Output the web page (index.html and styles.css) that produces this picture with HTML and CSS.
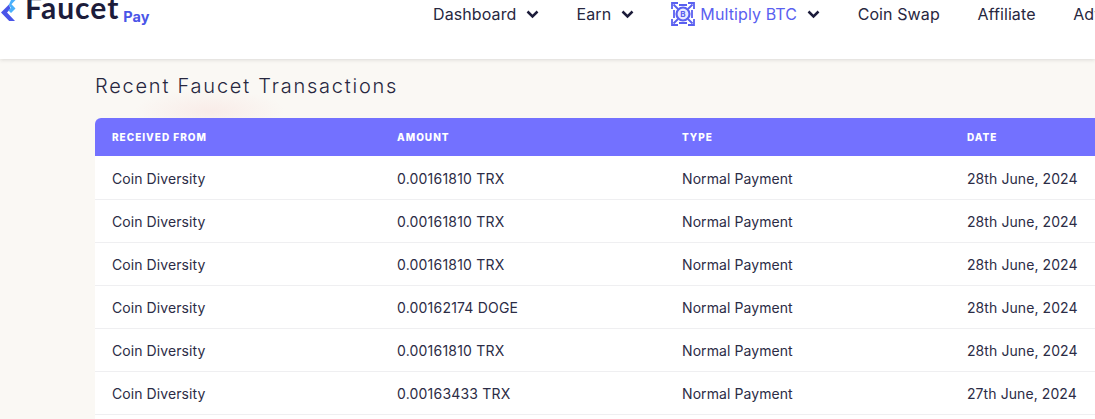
FILE: index.html
```html
<!DOCTYPE html>
<html lang="en">
<head>
<meta charset="utf-8">
<title>Recent Faucet Transactions</title>
<link rel="stylesheet" href="styles.css">
</head>
<body>
<header class="topbar">
  <a class="brand">
    <svg class="brand-mark" width="16" height="22" viewBox="0 0 16 22"><path d="M9 4.5 1 12.6 9.2 21H15L7 12.6 10.5 9Z" fill="#4a55e8"/><path d="M11 0H15.5L11.5 4.2 15.5 8.4 11 13 8.2 10.2 11 8 8.8 5Z" fill="#4ab0fb"/></svg>
    <span class="brand-name">Faucet</span>
    <span class="brand-pay">Pay</span>
  </a>
  <nav class="nav">
    <a class="nav-item">Dashboard <svg class="chev" viewBox="0 0 13 9"><path d="M1.5 1.5 6.5 6.5l5-5"/></svg></a>
    <a class="nav-item">Earn <svg class="chev" viewBox="0 0 13 9"><path d="M1.5 1.5 6.5 6.5l5-5"/></svg></a>
    <a class="nav-item nav-accent">
      <svg class="btc" viewBox="0 0 24 24">
        <path class="btc-frame" d="M7 1H1V7M17 1H23V7M7 23H1V17M17 23H23V17M8 3H16M8 21H16M3 8V16M21 8V16"/>
        <path class="btc-frame" d="M2.500 2.500 7 7M21.500 2.500 17 7M2.500 21.500 7 17M21.500 21.500 17 17"/>
        <circle class="btc-ring" cx="12" cy="12" r="6.500"/>
        <text class="btc-b" x="12" y="15">B</text>
      </svg>
      <span>Multiply BTC</span> <svg class="chev" viewBox="0 0 13 9"><path d="M1.5 1.5 6.5 6.5l5-5"/></svg></a>
    <a class="nav-item">Coin Swap</a>
    <a class="nav-item">Affiliate</a>
    <a class="nav-item">Advertise</a>
  </nav>
</header>
<main class="content">
  <h1 class="title">Recent Faucet Transactions</h1>
  <div class="card">
  <table class="tx">
    <thead>
      <tr><th>Received From</th><th>Amount</th><th>Type</th><th>Date</th></tr>
    </thead>
    <tbody>
      <tr><td>Coin Diversity</td><td>0.00161810 TRX</td><td>Normal Payment</td><td>28th June, 2024</td></tr>
      <tr><td>Coin Diversity</td><td>0.00161810 TRX</td><td>Normal Payment</td><td>28th June, 2024</td></tr>
      <tr><td>Coin Diversity</td><td>0.00161810 TRX</td><td>Normal Payment</td><td>28th June, 2024</td></tr>
      <tr><td>Coin Diversity</td><td>0.00162174 DOGE</td><td>Normal Payment</td><td>28th June, 2024</td></tr>
      <tr><td>Coin Diversity</td><td>0.00161810 TRX</td><td>Normal Payment</td><td>28th June, 2024</td></tr>
      <tr><td>Coin Diversity</td><td>0.00163433 TRX</td><td>Normal Payment</td><td>27th June, 2024</td></tr>
    </tbody>
  </table>
  </div>
</main>
</body>
</html>
```
FILE: styles.css
```css
* { box-sizing: border-box; }
html, body { margin: 0; height: 419px; overflow: hidden; }
body {
  background: #faf8f4;
  font-family: Inter, "Liberation Sans", sans-serif;
  color: #27273f;
  width: 1095px;
}
.topbar {
  height: 59px;
  background: #fff;
  box-shadow: 0 1px 4px rgba(60, 60, 60, .16);
  display: flex;
  align-items: flex-start;
  position: relative;
  overflow: hidden;
}
.brand { display: flex; align-items: flex-start; width: 433px; flex: none; height: 30px; }
.brand-mark { flex: none; margin-right: 9px; }
.brand-name {
  font-family: Lato, sans-serif;
  font-weight: 700;
  font-size: 30px;
  line-height: 30px;
  letter-spacing: 1px;
  color: #1c1c3a;
  margin: -8px 0 0 0;
}
.brand-pay {
  font-size: 14.5px;
  font-weight: 700;
  color: #4a55e8;
  line-height: 16px;
  margin: 9px 0 0 4px;
}
.nav { display: flex; flex: none; gap: 37.6px; padding-top: 4px; font-size: 16px; }
.nav-item { display: flex; align-items: center; height: 20px; white-space: nowrap; letter-spacing: .1px; gap: 9.5px; }
.nav-accent { color: #5a60f0; gap: 0; }
.nav-accent span { margin: 0 10px 0 5px; }
.chev { width: 13px; height: 9px; fill: none; stroke: #1c1c3a; stroke-width: 2.5; }
.btc { width: 24px; height: 24px; fill: none; }
.btc-frame { stroke: #5a60f0; stroke-width: 1.8; fill: none; }
.btc-ring { stroke: #5a60f0; stroke-width: 2.2; fill: #e9eaff; }
.btc-b { font-size: 8px; font-weight: 700; fill: #5a60f0; text-anchor: middle; }
.content {
  padding: 15px 0 0 95px;
  background: radial-gradient(ellipse 75px 22px at 210px 52px, #f9ece8 0%, rgba(249, 236, 232, 0) 100%);
  height: 360px;
  display: flex;
  flex-direction: column;
}
.title {
  margin: 0 0 20px;
  font-size: 20px;
  line-height: 24px;
  font-weight: 350;
  letter-spacing: 1.77px;
  color: #27273f;
}
.card { flex: 1; width: 1140px; background: #fff; border-top-left-radius: 6px; }
.tx {
  border-collapse: separate;
  border-spacing: 0;
  table-layout: fixed;
  width: 1140px;
}
.tx th {
  background: #7371ff;
  background-clip: padding-box;
  color: #fff;
  height: 39px;
  padding: 0 17px;
  border-bottom: 1px solid #fff;
  text-align: left;
  font-size: 10px;
  font-weight: 800;
  letter-spacing: 1px;
  text-transform: uppercase;
}
.tx th:first-child { border-top-left-radius: 6px; }
.tx td {
  height: 43px;
  padding: 0 17px;
  font-size: 14px;
  letter-spacing: .08px;
  border-bottom: 1px solid #efeff1;
  color: #2c2c46;
}
.tx td:nth-child(2) { letter-spacing: .2px; }
```
